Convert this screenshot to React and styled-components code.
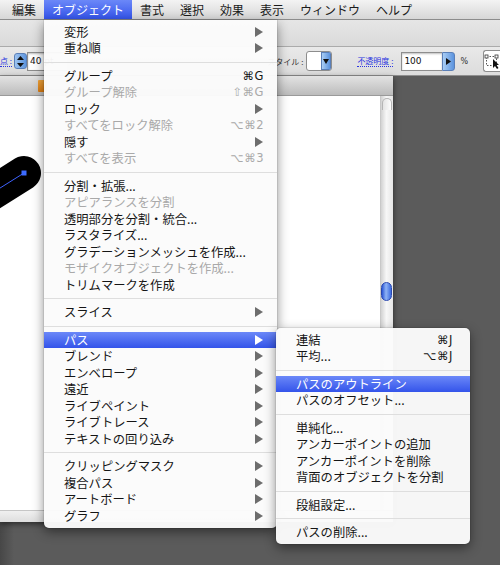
import React from 'react';
import styled, { createGlobalStyle } from 'styled-components';

const GlobalStyle = createGlobalStyle`
  * { box-sizing: border-box; }
  html, body { margin: 0; padding: 0; background: #575757; overflow: hidden; }
`;

const Screen = styled.div`
  position: relative;
  width: 500px;
  height: 565px;
  display: flex;
  flex-direction: column;
  overflow: hidden;
  font-family: "Noto Sans CJK JP", "Noto Sans", sans-serif;
`;

/* ---------- menu bar ---------- */

const MenuBar = styled.div`
  height: 20px;
  flex-shrink: 0;
  display: flex;
  padding-left: 4px;
  background: linear-gradient(#f3f3f3, #d7d7d7);
  border-bottom: 1px solid #8c8c8c;
`;

const MenuTitle = styled.div`
  display: flex;
  align-items: center;
  padding: 0 8px 1px;
  font-size: 12px;
  color: ${p => (p.$open ? '#fff' : '#1a1a1a')};
  background: ${p => (p.$open ? 'linear-gradient(#6b88f8, #3454ea)' : 'transparent')};
`;

/* ---------- toolbars ---------- */

const ToolStrip = styled.div`
  height: 27px;
  flex-shrink: 0;
  background: linear-gradient(#e6e6e6, #dadada);
  border-bottom: 1px solid #ababab;
`;

const ControlBar = styled.div`
  height: 29px;
  flex-shrink: 0;
  display: flex;
  align-items: center;
  background: linear-gradient(#e9e9e9, #dcdcdc);
  border-bottom: 1px solid #8f8f8f;
  font-size: 8px;
  overflow: hidden;
`;

const LinkLabel = styled.span`
  color: #2b35e0;
  border-bottom: 1px dotted #2b35e0;
  line-height: 10px;
  white-space: nowrap;
  margin-left: ${p => p.$ml || 0}px;
`;

const PlainLabel = styled.span`
  color: #333;
  white-space: nowrap;
  margin-right: 3px;
`;

const Stepper = styled.div`
  width: 13px;
  height: 16px;
  margin-left: 2px;
  border-radius: 3px;
  border: 1px solid #5a7fb8;
  background: linear-gradient(to right, #9ec4f0, #5d95de);
  display: flex;
  align-items: center;
  justify-content: center;
`;

const Field = styled.div`
  width: ${p => p.$w}px;
  height: 19px;
  margin-left: ${p => p.$ml || 0}px;
  background: #fff;
  border: 1px solid #8d8d8d;
  border-right: none;
  box-shadow: inset 0 1px 2px rgba(0, 0, 0, 0.25);
  font-family: "DejaVu Sans", "Liberation Sans", sans-serif;
  font-size: 9px;
  line-height: 17px;
  padding-left: 2px;
  color: #111;
`;

const Dropdown = styled.div`
  width: 26px;
  height: 20px;
  display: flex;
  justify-content: flex-end;
  background: #fff;
  border: 1px solid #8d8d8d;
  border-radius: 3px;
  overflow: hidden;
`;

const BlueButton = styled.div`
  width: ${p => p.$w}px;
  height: ${p => p.$h}px;
  display: flex;
  align-items: center;
  justify-content: center;
  background: linear-gradient(to right, #a9cdf4, #5b93de);
  border: 1px solid #5a7fb8;
  border-radius: ${p => p.$r || '0 3px 3px 0'};
`;

const Percent = styled.span`
  margin-left: 5px;
  color: #333;
  font-family: "DejaVu Sans", sans-serif;
  font-size: 8px;
`;

const ToolIcon = styled.div`
  width: 17px;
  height: 22px;
  margin-left: 15px;
  flex-shrink: 0;
  background: #fff;
  border: 1px solid #8d8d8d;
  border-right: none;
  border-radius: 3px 0 0 3px;
  display: flex;
  align-items: center;
  justify-content: flex-start;
  overflow: hidden;
`;

const Spacer = styled.div`
  flex: 1;
`;

/* ---------- workspace ---------- */

const Workspace = styled.div`
  flex: 1;
  display: flex;
  align-items: flex-start;
  background: linear-gradient(to right, #474747, #5b5b5b 14px);
`;

const DocWindow = styled.div`
  width: 393px;
  height: 446px;
  display: flex;
  flex-direction: column;
  box-shadow: 0 2px 6px rgba(0, 0, 0, 0.55);
`;

const TitleBar = styled.div`
  height: 20px;
  display: flex;
  align-items: center;
  background: linear-gradient(#e3e3e3, #bcbcbc);
  border-bottom: 1px solid #9a9a9a;
`;

const DocTab = styled.div`
  width: 9px;
  height: 12px;
  margin-left: 38px;
  background: linear-gradient(#f1a43a, #d97a10);
  border-radius: 1px;
`;

const DocBody = styled.div`
  flex: 1;
  display: flex;
`;

const Canvas = styled.div`
  position: relative;
  flex: 1;
  background: #fff;
  overflow: hidden;
`;

const Artwork = styled.svg`
  position: absolute;
  left: 0;
  top: 0;
`;

const VScroll = styled.div`
  width: 13px;
  display: flex;
  flex-direction: column;
  background: linear-gradient(to right, #d2d2d2, #f7f7f7 45%, #e6e6e6);
  border-left: 1px solid #c8c8c8;
`;

const ScrollCap = styled.div`
  height: 12px;
  margin: 2px 1px 0;
  border-radius: 6px 6px 0 0;
  border: 1px solid #b5b5b5;
  border-bottom: none;
  background: linear-gradient(to right, #e4e4e4, #fdfdfd);
`;

const ScrollThumb = styled.div`
  width: 11px;
  height: 19px;
  margin-top: ${p => p.$offset}px;
  border-radius: 6px;
  background: linear-gradient(to right, #2b56d6, #8fb3f5 45%, #3b6ae0);
  border: 1px solid #2a48b0;
`;

const HScroll = styled.div`
  height: 12px;
  background: linear-gradient(#f0f0f0, #dedede);
  border-top: 1px solid #c6c6c6;
`;

/* ---------- pull-down menus ---------- */

const Menu = styled.div`
  position: absolute;
  left: ${p => p.$x}px;
  top: ${p => p.$y}px;
  width: ${p => p.$w}px;
  padding: 3.5px 0 ${p => (p.$sub ? 3 : 4)}px;
  background: rgba(251, 251, 251, 0.97);
  border-radius: ${p => (p.$sub ? '5px' : '0 0 5px 5px')};
  box-shadow: 0 4px 12px rgba(0, 0, 0, 0.45), 0 0 0 1px rgba(0, 0, 0, 0.07);
`;

const Row = styled.div`
  height: 16.5px;
  display: flex;
  align-items: center;
  padding: 0 ${p => p.$padR}px 0 20px;
  font-size: 12.3px;
  white-space: nowrap;
  color: ${p => (p.$active ? '#fff' : p.$off ? '#a9a9a9' : '#151515')};
  background: ${p => (p.$active ? 'linear-gradient(#6b88f8, #3454ea)' : 'transparent')};
`;

const RowLabel = styled.span`
  flex: 1;
`;

const Shortcut = styled.span`
  font-family: "DejaVu Sans", "Liberation Sans", sans-serif;
  font-size: 11.5px;
  letter-spacing: 0.5px;
`;

const Separator = styled.div`
  height: 11px;
  display: flex;
  align-items: center;
  &::after {
    content: '';
    flex: 1;
    height: 1px;
    background: #dedede;
  }
`;

const Arrow = ({ active }) => (
  <svg width="8" height="10" viewBox="0 0 8 10" style={{ marginRight: 1 }}>
    <polygon points="0,0 8,5 0,10" fill={active ? '#fff' : '#6d6d6d'} />
  </svg>
);

const objectMenu = [
  { label: '変形', sub: true },
  { label: '重ね順', sub: true },
  'sep',
  { label: 'グループ', key: '⌘G' },
  { label: 'グループ解除', key: '⇧⌘G', off: true },
  { label: 'ロック', sub: true },
  { label: 'すべてをロック解除', key: '⌥⌘2', off: true },
  { label: '隠す', sub: true },
  { label: 'すべてを表示', key: '⌥⌘3', off: true },
  'sep',
  { label: '分割・拡張...' },
  { label: 'アピアランスを分割', off: true },
  { label: '透明部分を分割・統合...' },
  { label: 'ラスタライズ...' },
  { label: 'グラデーションメッシュを作成...' },
  { label: 'モザイクオブジェクトを作成...', off: true },
  { label: 'トリムマークを作成' },
  'sep',
  { label: 'スライス', sub: true },
  'sep',
  { label: 'パス', sub: true, active: true },
  { label: 'ブレンド', sub: true },
  { label: 'エンベロープ', sub: true },
  { label: '遠近', sub: true },
  { label: 'ライブペイント', sub: true },
  { label: 'ライブトレース', sub: true },
  { label: 'テキストの回り込み', sub: true },
  'sep',
  { label: 'クリッピングマスク', sub: true },
  { label: '複合パス', sub: true },
  { label: 'アートボード', sub: true },
  { label: 'グラフ', sub: true },
];

const pathMenu = [
  { label: '連結', key: '⌘J' },
  { label: '平均...', key: '⌥⌘J' },
  'sep',
  { label: 'パスのアウトライン', active: true },
  { label: 'パスのオフセット...' },
  'sep',
  { label: '単純化...' },
  { label: 'アンカーポイントの追加' },
  { label: 'アンカーポイントを削除' },
  { label: '背面のオブジェクトを分割' },
  'sep',
  { label: '段組設定...' },
  'sep',
  { label: 'パスの削除...' },
];

const MenuItems = ({ items, padR }) =>
  items.map((it, i) =>
    it === 'sep' ? (
      <Separator key={i} />
    ) : (
      <Row key={i} $padR={padR} $active={it.active} $off={it.off}>
        <RowLabel>{it.label}</RowLabel>
        {it.key && <Shortcut>{it.key}</Shortcut>}
        {it.sub && <Arrow active={it.active} />}
      </Row>
    )
  );

const menuTitles = ['編集', 'オブジェクト', '書式', '選択', '効果', '表示', 'ウィンドウ', 'ヘルプ'];

const App = () => {
  return (
    <Screen>
      <GlobalStyle />
      <MenuBar>
        {menuTitles.map(t => (
          <MenuTitle key={t} $open={t === 'オブジェクト'}>{t}</MenuTitle>
        ))}
      </MenuBar>

      <ToolStrip />

      <ControlBar>
        <LinkLabel>点 :</LinkLabel>
        <Stepper>
          <svg width="7" height="11" viewBox="0 0 7 11">
            <polygon points="3.5,0 7,4 0,4" fill="#111" />
            <polygon points="0,7 7,7 3.5,11" fill="#111" />
          </svg>
        </Stepper>
        <Field $w={40}>40 pt</Field>
        <Spacer />
        <PlainLabel>スタイル :</PlainLabel>
        <Dropdown>
          <BlueButton $w={10} $h={18} $r="0">
            <svg width="6" height="5" viewBox="0 0 6 5">
              <polygon points="0,0 6,0 3,5" fill="#111" />
            </svg>
          </BlueButton>
        </Dropdown>
        <LinkLabel $ml={25}>不透明度 :</LinkLabel>
        <Field $w={41} $ml={8}>100</Field>
        <BlueButton $w={13} $h={19}>
          <svg width="5" height="7" viewBox="0 0 5 7">
            <polygon points="0,0 5,3.5 0,7" fill="#111" />
          </svg>
        </BlueButton>
        <Percent>%</Percent>
        <ToolIcon>
          <svg width="16" height="16" viewBox="0 0 16 16">
            <rect x="2.5" y="3.5" width="10" height="9" fill="none" stroke="#555" strokeDasharray="1.5 1.5" />
            <rect x="1" y="2" width="3" height="3" fill="#fff" stroke="#333" strokeWidth="0.8" />
            <rect x="11" y="2" width="3" height="3" fill="#fff" stroke="#333" strokeWidth="0.8" />
            <polygon points="9,6 9,15 11,13 13,16 14.5,15 12.5,12 15,12" fill="#111" />
          </svg>
        </ToolIcon>
      </ControlBar>

      <Workspace>
        <DocWindow>
          <TitleBar>
            <DocTab />
          </TitleBar>
          <DocBody>
            <Canvas>
              <Artwork width="120" height="160" viewBox="0 0 120 160">
                <line x1="24" y1="77" x2="-70" y2="136" stroke="#000" strokeWidth="34" strokeLinecap="round" />
                <line x1="24" y1="77" x2="-70" y2="136" stroke="#3d62ff" strokeWidth="1" />
                <rect x="21.5" y="74.5" width="5" height="5" fill="#3d6cff" />
              </Artwork>
            </Canvas>
            <VScroll>
              <ScrollCap />
              <ScrollThumb $offset={172} />
            </VScroll>
          </DocBody>
          <HScroll />
        </DocWindow>
      </Workspace>

      <Menu $x={44} $y={20} $w={233}>
        <MenuItems items={objectMenu} padR={13} />
      </Menu>

      <Menu $x={276} $y={328} $w={194} $sub>
        <MenuItems items={pathMenu} padR={17} />
      </Menu>
    </Screen>
  );
};

export default App;
